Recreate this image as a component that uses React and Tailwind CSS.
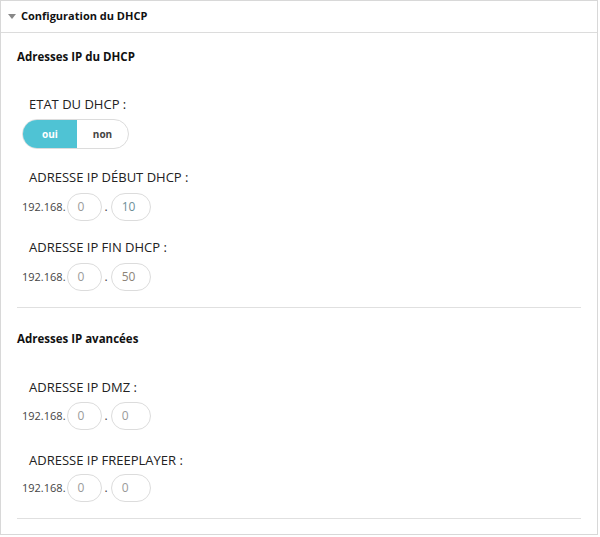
export default function App() {
    const IpRow = ({ a, b, colorB = "text-[#9a9a9a]" }) => (
        <div className="flex items-center h-[28px] text-[11px] text-[#444]">
            <span className="mr-[1px]">192.168.</span>
            <div className="w-[35px] h-[28px] rounded-full border border-[#dcdcdc] flex items-center pl-[10px] text-[12px] text-[#9a9a9a]">
                {a}
            </div>
            <span className="mx-[3px] text-[12px]">.</span>
            <div className={`w-[40px] h-[28px] rounded-full border border-[#dcdcdc] flex items-center pl-[10px] text-[12px] ${colorB}`}>
                {b}
            </div>
        </div>
    );

    const Label = ({ children, className = "" }) => (
        <div className={`pl-[7px] text-[13px] leading-[18px] text-[#222] ${className}`}>{children}</div>
    );

    return (
        <div className="w-[600px] h-[537px] bg-white" style={{ fontFamily: '"Open Sans", sans-serif' }}>
            <div className="w-[598px] h-[535px] border border-[#d8d8d8]">
                {/* Header */}
                <div className="h-[32px] border-b border-[#dcdcdc] flex items-center pl-[7px]">
                    <svg width="8" height="6" viewBox="0 0 8 6" className="mr-[5px]">
                        <path d="M0 0 L8 0 L4 5 Z" fill="#888" />
                    </svg>
                    <span className="text-[11px] font-bold text-[#111]">Configuration du DHCP</span>
                </div>

                <div className="px-[16px]">
                    {/* Section 1 */}
                    <div className="mt-[16px] text-[11.5px] leading-[16px] font-bold text-[#111]">Adresses IP du DHCP</div>
                    <div className="pl-[5px]">
                        <Label className="mt-[30px]">ETAT DU DHCP :</Label>
                        <div className="mt-[6px] w-[107px] h-[30px] rounded-full border border-[#dcdcdc] flex overflow-hidden text-[10px] font-bold">
                            <div className="w-[54px] bg-[#4fc3d4] text-white flex items-center justify-center">oui</div>
                            <div className="flex-1 text-[#444] flex items-center justify-center">non</div>
                        </div>
                        <Label className="mt-[19px]">ADRESSE IP DÉBUT DHCP :</Label>
                        <div className="mt-[7px]">
                            <IpRow a="0" b="10" colorB="text-[#6f8f98]" />
                        </div>
                        <Label className="mt-[17px]">ADRESSE IP FIN DHCP :</Label>
                        <div className="mt-[7px]">
                            <IpRow a="0" b="50" colorB="text-[#8d8478]" />
                        </div>
                    </div>
                    <div className="mt-[16px] border-t border-[#e0e0e0]" />

                    {/* Section 2 */}
                    <div className="mt-[23px] text-[11.5px] leading-[16px] font-bold text-[#111]">Adresses IP avancées</div>
                    <div className="pl-[5px]">
                        <Label className="mt-[31px]">ADRESSE IP DMZ :</Label>
                        <div className="mt-[6px]">
                            <IpRow a="0" b="0" />
                        </div>
                        <Label className="mt-[21px]">ADRESSE IP FREEPLAYER :</Label>
                        <div className="mt-[5px]">
                            <IpRow a="0" b="0" />
                        </div>
                    </div>
                    <div className="mt-[16px] border-t border-[#e0e0e0]" />
                </div>
            </div>
        </div>
    );
}
